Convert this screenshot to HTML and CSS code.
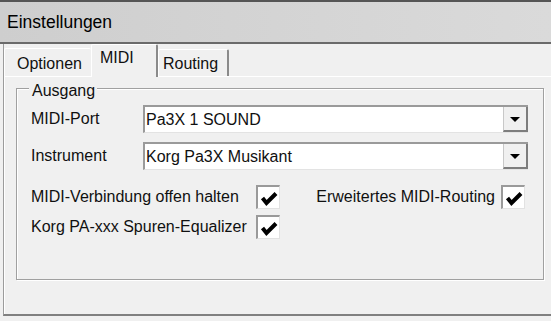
FILE: index.html
```html
<!DOCTYPE html>
<html lang="de">
<head>
  <meta charset="UTF-8">
  <title>Einstellungen</title>
  <link rel="stylesheet" href="styles.css">
</head>
<body>
  <div class="titlebar">Einstellungen</div>

  <div class="tabctl">
    <div class="tabs">
      <div class="tab first">Optionen</div>
      <div class="tab active">MIDI</div>
      <div class="tab last">Routing</div>
    </div>

    <div class="page">
      <fieldset class="group">
        <legend>Ausgang</legend>

        <div class="field">
          <label>MIDI-Port</label>
          <div class="combo">
            <span class="value">Pa3X 1 SOUND</span>
            <span class="arrow"></span>
          </div>
        </div>

        <div class="field">
          <label>Instrument</label>
          <div class="combo">
            <span class="value">Korg Pa3X Musikant</span>
            <span class="arrow"></span>
          </div>
        </div>

        <div class="checks">
          <span class="check-label">MIDI-Verbindung offen halten</span>
          <span class="checkbox"><svg viewBox="0 0 21 21"><polyline points="4.5,11 8.5,16 18,6.5"/></svg></span>
          <span class="check-label right">Erweitertes MIDI-Routing</span>
          <span class="checkbox"><svg viewBox="0 0 21 21"><polyline points="4.5,11 8.5,16 18,6.5"/></svg></span>
          <span class="check-label">Korg PA-xxx Spuren-Equalizer</span>
          <span class="checkbox"><svg viewBox="0 0 21 21"><polyline points="4.5,11 8.5,16 18,6.5"/></svg></span>
        </div>
      </fieldset>
    </div>
  </div>
</body>
</html>
```

FILE: styles.css
```css
body {
  margin: 0;
  background-color: #f0f0f0;
  font-family: "Liberation Sans", Arial, sans-serif;
  font-size: 16px;
  color: #101010;
}

.titlebar {
  box-sizing: border-box;
  height: 44px;
  padding-left: 7px;
  border-top: 2px solid #555555;
  border-bottom: 2px solid #6a6a6a;
  background: linear-gradient(90deg, #cecece, #d4d4d4 50%, #dadada);
  font-size: 17.5px;
  line-height: 40px;
  color: #000000;
}

.tabctl {
  margin-left: 3px;
  border-left: 1px solid #9c9c9c;
  border-bottom: 2px solid #808080;
}

.tabs {
  display: flex;
  align-items: flex-end;
  height: 32px;
}

.tab {
  box-sizing: border-box;
  height: 28px;
  border-top: 1px solid #ffffff;
  border-left: 1px solid #ffffff;
  border-right: 2px solid #8a8a8a;
  border-radius: 2px 2px 0 0;
  line-height: 18px;
  white-space: nowrap;
}

.tab.first {
  width: 87px;
  padding: 6px 0 0 12px;
  border-right: 0;
}

.tab.active {
  position: relative;
  width: 67px;
  height: 33px;
  margin-bottom: -1px;
  padding: 4px 0 0 8px;
  background-color: #f0f0f0;
}

.tab.last {
  width: 71px;
  height: 27px;
  padding: 5px 0 0 4px;
}

.page {
  border-top: 1px solid #ffffff;
  border-left: 1px solid #ffffff;
  padding: 0 7px 34px 11px;
}

.group {
  margin: 0;
  min-width: 0;
  padding: 5px 15px 40px 14px;
  border: 1px solid #a0a0a0;
  box-shadow: inset 1px 1px #ffffff, 1px 1px #ffffff;
}

.group legend {
  margin-left: -2px;
  padding: 5px 2px 0 3px;
  line-height: 18px;
  background-color: #f0f0f0;
}

.field {
  display: grid;
  grid-template-columns: 112px 1fr;
  align-items: center;
  line-height: 18px;
}

.field + .field {
  margin-top: 9px;
}

.combo {
  display: flex;
  box-sizing: border-box;
  height: 28px;
  border-top: 2px solid #9a9a9a;
  border-left: 2px solid #9a9a9a;
  border-bottom: 1px solid #e3e3e3;
  background-color: #ffffff;
}

.combo .value {
  flex: 1;
  padding: 1px 0 0 1px;
  line-height: 24px;
  white-space: nowrap;
}

.combo .arrow {
  display: flex;
  align-items: center;
  justify-content: center;
  box-sizing: border-box;
  width: 25px;
  padding-top: 2px;
  border-left: 1px solid #c8c8c8;
  border-right: 2px solid #7d7d7d;
  border-bottom: 2px solid #7d7d7d;
  background-color: #f0f0f0;
}

.combo .arrow::after {
  content: "";
  border-top: 5px solid #000000;
  border-left: 5px solid transparent;
  border-right: 5px solid transparent;
}

.checks {
  display: grid;
  grid-template-columns: 225px 24px 1fr 24px;
  grid-auto-rows: 24px;
  row-gap: 6px;
  align-items: center;
  margin-top: 15px;
  padding-right: 3px;
  line-height: 18px;
}

.check-label {
  white-space: nowrap;
}

.check-label.right {
  text-align: right;
  padding-right: 6px;
}

.checkbox {
  box-sizing: border-box;
  width: 24px;
  height: 24px;
  border-top: 2px solid #9a9a9a;
  border-left: 2px solid #9a9a9a;
  border-right: 1px solid #e2e2e2;
  border-bottom: 1px solid #e2e2e2;
  background-color: #ffffff;
}

.checkbox svg {
  display: block;
  width: 21px;
  height: 21px;
}

.checkbox polyline {
  fill: none;
  stroke: #000000;
  stroke-width: 4;
}
```
